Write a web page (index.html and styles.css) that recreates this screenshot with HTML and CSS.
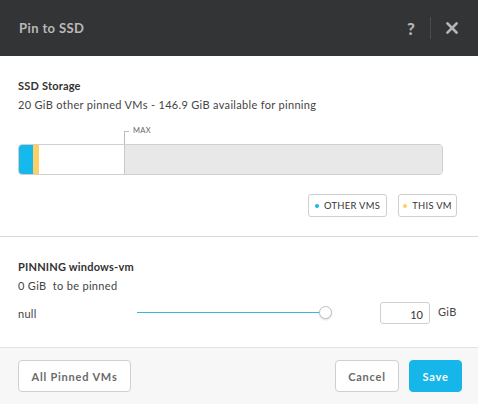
FILE: index.html
```html
<!DOCTYPE html>
<html>
<head>
<meta charset="utf-8">
<link rel="stylesheet" href="styles.css">
</head>
<body>
<div class="modal">
  <div class="header">
    <div class="title">Pin to SSD</div>
    <div class="tools">
      <span class="help">?</span>
      <span class="sep"></span>
      <svg class="close" width="12" height="12" viewBox="0 0 12 12"><path d="M1.5 1.5L10.5 10.5M10.5 1.5L1.5 10.5" stroke="#b4b4b4" stroke-width="2.6" stroke-linecap="square"/></svg>
    </div>
  </div>
  <div class="storage">
    <div class="h">SSD Storage</div>
    <div class="sub">20 GiB other pinned VMs - 146.9 GiB available for pinning</div>
    <div class="chart">
      <div class="max"><span class="tick"></span><span class="maxlbl">MAX</span></div>
      <div class="bar">
        <div class="seg other"></div>
        <div class="seg thisvm"></div>
        <div class="seg free"></div>
        <div class="seg over"></div>
      </div>
    </div>
    <div class="legend">
      <span class="chip chip-other"><i class="dot blue"></i>OTHER VMS</span>
      <span class="chip chip-this"><i class="dot yellow"></i>THIS VM</span>
    </div>
  </div>
  <div class="pinning">
    <div class="h">PINNING windows-vm</div>
    <div class="sub">0 GiB&nbsp; to be pinned</div>
    <div class="row">
      <span class="null">null</span>
      <div class="slider"><span class="track"></span><span class="knob"></span></div>
      <div class="input">10</div>
      <span class="unit">GiB</span>
    </div>
  </div>
  <div class="footer">
    <button class="btn">All Pinned VMs</button>
    <div class="right">
      <button class="btn">Cancel</button>
      <button class="btn primary">Save</button>
    </div>
  </div>
</div>
</body>
</html>
```
FILE: styles.css
```css
* { box-sizing: border-box; }
html, body { margin: 0; padding: 0; }
body { width: 478px; height: 404px; overflow: hidden; font-family: Lato, "Open Sans", sans-serif; color: #4a4a4a; background: #fff; }
.modal { width: 478px; height: 404px; display: flex; flex-direction: column; }
.header { height: 56px; background: #333436; display: flex; align-items: center; justify-content: space-between; padding: 0 20px 0 19px; }
.title { color: #b9b9b9; font-size: 13px; font-weight: 700; letter-spacing: 0.4px; }
.tools { display: flex; align-items: center; }
.help { color: #b4b4b4; font-size: 17px; font-weight: 900; width: 10px; text-align: center; }
.sep { width: 1px; height: 22px; background: #4a4b4d; margin: 0 15px 0 14px; }
.close { display: block; }
.storage { padding: 22px 18px 0 18px; height: 181px; border-bottom: 1px solid #d9d9d9; }
.h { font-size: 11px; font-weight: 700; color: #333; line-height: 16px; letter-spacing: 0.2px; }
.sub { font-size: 11px; color: #444; line-height: 16px; margin-top: 3px; letter-spacing: 0.32px; }
.chart { margin-top: 12px; width: 425px; }
.max { height: 19px; position: relative; }
.tick { position: absolute; left: 106px; top: 6px; width: 5px; height: 13px; border-left: 1px solid #bbb; border-top: 1px solid #bbb; }
.maxlbl { position: absolute; left: 115px; top: 1px; font-size: 7.5px; color: #666; letter-spacing: 0.4px; }
.bar { height: 31px; border: 1px solid #cfcfcf; border-radius: 4px; display: flex; overflow: hidden; }
.seg { height: 100%; }
.other { width: 14px; background: #16b9ec; }
.thisvm { width: 6px; background: #fdd067; }
.free { width: 86px; background: #fff; border-right: 1px solid #c9c9c9; }
.over { flex: 1; background: #e8e8e8; }
.legend { display: flex; justify-content: flex-end; gap: 11px; margin-top: 19px; margin-right: 3px; }
.chip { height: 23px; border: 1px solid #cfcfcf; border-radius: 3px; font-size: 9.4px; color: #333; display: flex; align-items: center; justify-content: center; letter-spacing: 0.3px; }
.chip-other { width: 79px; }
.chip-this { width: 59px; }
.dot { width: 4px; height: 4px; border-radius: 50%; display: inline-block; margin-right: 5px; }
.blue { background: #16b9ec; }
.yellow { background: #fdd067; }
.pinning { padding: 22px 18px 0 18px; height: 111px; border-bottom: 1px solid #e3e3e3; }
.row { display: flex; align-items: center; margin-top: 8px; height: 22px; }
.null { font-size: 11px; color: #444; width: 119px; letter-spacing: 0.3px; }
.slider { position: relative; width: 195px; height: 14px; }
.track { position: absolute; left: 0; right: 6px; top: 6px; height: 1px; background: #3db3e0; }
.knob { position: absolute; right: 0; top: 0; width: 13px; height: 13px; border-radius: 50%; background: #fff; border: 1px solid #bfbfbf; box-shadow: 0 1px 2px rgba(0,0,0,0.15); }
.input { margin-left: 48px; width: 50px; height: 22px; border: 1px solid #cfcfcf; border-radius: 3px; font-size: 11px; color: #333; text-align: right; padding: 5px 6px 0 0; }
.unit { margin-left: 8px; font-size: 11px; color: #444; margin-top: -3px; letter-spacing: 0.3px; }
.footer { flex: 1; background: #f7f7f7; display: flex; align-items: center; justify-content: space-between; padding: 0 16px 0 18px; }
.right { display: flex; gap: 10px; }
.btn { height: 32px; border: 1px solid #cfcfcf; border-radius: 4px; background: #fff; font-family: Lato, "Open Sans", sans-serif; font-size: 11px; font-weight: 700; color: #6a6a6a; padding: 0 8px; letter-spacing: 0.8px; cursor: pointer; }
.footer > .btn { width: 113px; }
.right .btn { width: 64px; }
.right .primary { width: 53px; background: #16b5ea; border-color: #16b5ea; color: #fff; }
```
